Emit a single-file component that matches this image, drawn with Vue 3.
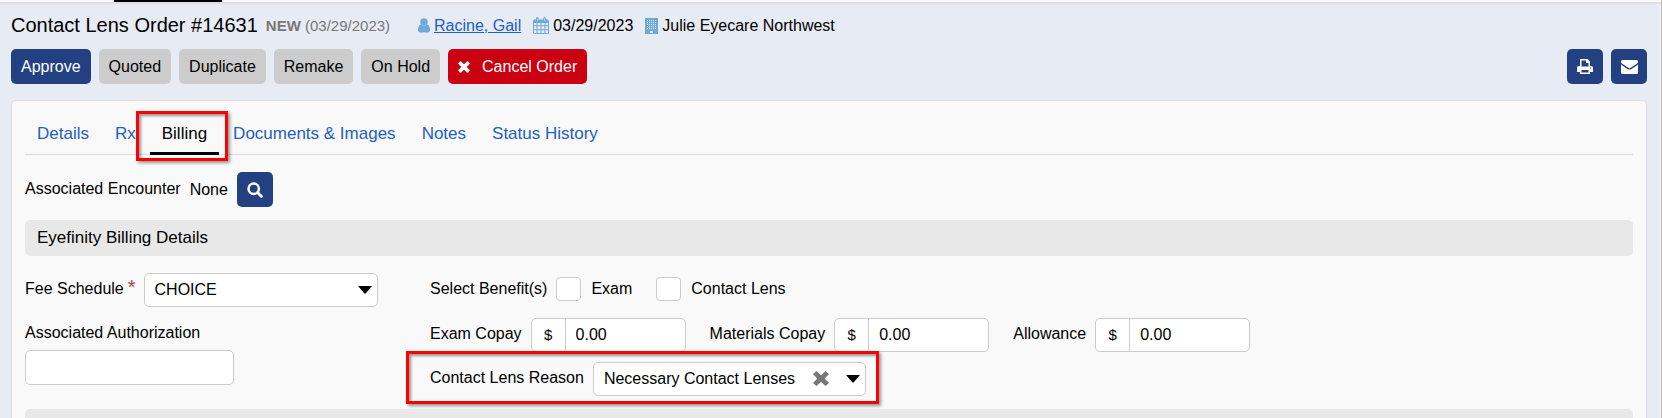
<script setup>
import { ref } from 'vue'

const actions = ['Quoted', 'Duplicate', 'Remake', 'On Hold']
const tabs = ['Details', 'Rx', 'Billing', 'Documents & Images', 'Notes', 'Status History']
const activeTab = ref('Billing')
const feeSchedule = ref('CHOICE')
const authorization = ref('')
const reason = ref('Necessary Contact Lenses')
const amounts = ref([
  { id: 'exam-copay', label: 'Exam Copay', value: '0.00' },
  { id: 'materials-copay', label: 'Materials Copay', value: '0.00' },
  { id: 'allowance', label: 'Allowance', value: '0.00' }
])
</script>

<template>
  <div class="page">
    <div class="topbar"><span class="topbar-active"></span></div>

    <header class="order-head">
      <h1>Contact Lens Order #14631</h1>
      <p class="state"><b>NEW</b> (03/29/2023)</p>
      <div class="meta patient">
        <svg class="icon" width="12" height="15" viewBox="0 0 12 15" aria-hidden="true">
          <circle cx="6" cy="4" r="3.7" />
          <path d="M3 6.6C1 7 0 9 0 12c0 1.600 1 2.500 2.300 2.500h7.400C11 14.500 12 13.600 12 12c0-3-1-5-3-5.400C8.200 7.500 7.100 8 6 8S3.800 7.500 3 6.600z" />
        </svg>
        <a href="#">Racine, Gail</a>
      </div>
      <div class="meta">
        <svg class="icon" width="16" height="17" viewBox="0 0 16 17" aria-hidden="true">
          <path fill-rule="evenodd" d="M1.500 2.500H3V1.500Q3 0 4.300 0T5.600 1.500v1h4.800v-1Q10.400 0 11.700 0T13 1.500v1h1.500Q16 2.500 16 4v11.500Q16 17 14.500 17h-13Q0 17 0 15.500V4Q0 2.500 1.500 2.500zM1 6v2.200h2.500V6zm3.500 0v2.200h3V6zm4 0v2.200h3V6zm4 0v2.200H15V6zM1 9.200v3h2.500v-3zm3.500 0v3h3v-3zm4 0v3h3v-3zm4 0v3H15v-3zM1 13.200V16h2.500v-2.800zm3.500 0V16h3v-2.800zm4 0V16h3v-2.800zm4 0V16H15v-2.800zM4 1.500v2.500h.6V1.500zm7.400 0v2.500h.6V1.500z" />
        </svg>
        <span>03/29/2023</span>
      </div>
      <div class="meta">
        <svg class="icon" width="13" height="16" viewBox="0 0 13 16" aria-hidden="true">
          <path fill-rule="evenodd" d="M0 0h13v16H0zM5 13v2h3v-2z" />
          <path class="windows" d="M2 2.500h9M2 4.500h9M2 6.500h9M2 8.500h9M2 10.500h9" />
        </svg>
        <span>Julie Eyecare Northwest</span>
      </div>
    </header>

    <div class="toolbar">
      <button type="button" class="btn primary">Approve</button>
      <button v-for="a in actions" :key="a" type="button" class="btn">{{ a }}</button>
      <button type="button" class="btn danger">
        <svg width="12" height="12" viewBox="0 0 12 12" aria-hidden="true"><path d="M2.500 0L6 3.300 9.500 0 12 2.500 8.700 6 12 9.500 9.500 12 6 8.700 2.500 12 0 9.500 3.300 6 0 2.500z" /></svg>
        Cancel Order
      </button>
      <span class="spacer"></span>
      <button type="button" class="btn primary square" aria-label="Print">
        <svg width="16" height="15" viewBox="0 0 16 15" aria-hidden="true">
          <path fill-rule="evenodd" d="M3 0h7.500L13 2.500V7h1.200Q16 7 16 8.800V13h-3v2H3v-2H0V8.800Q0 7 1.800 7H3zM4.500 1.500v6h7V4H9V1.500zM4.500 11v2.500h7V11zM13.200 8.400v1h1v-1z" />
        </svg>
      </button>
      <button type="button" class="btn primary square" aria-label="Email">
        <svg width="17" height="14" viewBox="0 0 17 14" aria-hidden="true">
          <path d="M1.500 0h14Q17 0 17 1.500v.7Q16.500 3.600 8.500 8.500 .5 3.600 0 2.200v-.7Q0 0 1.500 0zM0 4.300q1.500 1.700 6.500 4.600 2 1.300 4 0 5-2.900 6.500-4.600v8.200Q17 14 15.500 14h-14Q0 14 0 12.500z" />
        </svg>
      </button>
    </div>

    <main class="panel">
      <nav class="tabs">
        <div v-for="t in tabs" :key="t" class="tab-slot">
          <a href="#" class="tab" :class="{ active: t === activeTab }" @click.prevent="activeTab = t">{{ t }}</a>
          <span v-if="t === 'Billing'" class="callout callout-tab"></span>
        </div>
      </nav>

      <div class="encounter">
        <span class="enc-label">Associated Encounter</span>
        <span>None</span>
        <button type="button" class="btn primary square" aria-label="Search encounters">
          <svg width="16" height="16" viewBox="0 0 16 16" aria-hidden="true">
            <circle cx="6.7" cy="6.700" r="5.200" class="lens" />
            <path d="M10.500 10.500l4 4" class="handle" />
          </svg>
        </button>
      </div>

      <h2 class="section">Eyefinity Billing Details</h2>

      <div class="form">
        <div class="col">
          <div class="row first">
            <label for="fee">Fee Schedule<span class="required">*</span></label>
            <div class="select-box fee">
              <select id="fee" v-model="feeSchedule"><option>CHOICE</option></select>
              <svg class="caret" width="14" height="8" viewBox="0 0 14 8" aria-hidden="true"><path d="M0 0h14L7.500 7.500h-1z" /></svg>
            </div>
          </div>
          <label for="auth" class="auth-label">Associated Authorization</label>
          <input id="auth" v-model="authorization" type="text" class="auth" />
        </div>

        <div class="col">
          <div class="row first">
            <span class="label benefits">Select Benefit(s)</span>
            <label class="check"><input type="checkbox" />Exam</label>
            <label class="check"><input type="checkbox" />Contact Lens</label>
          </div>
          <div class="row money">
            <div v-for="m in amounts" :key="m.id" class="field">
              <label :for="m.id">{{ m.label }}</label>
              <div class="amount">
                <span class="unit">$</span>
                <input :id="m.id" v-model="m.value" type="text" />
              </div>
            </div>
          </div>
          <div class="row reason-row">
            <label for="reason">Contact Lens Reason</label>
            <div class="select-box reason">
              <select id="reason" v-model="reason">
                <option value=""></option>
                <option>Necessary Contact Lenses</option>
              </select>
              <button type="button" class="clear" aria-label="Clear reason" @click="reason = ''">
                <svg width="16" height="15" viewBox="0 0 12 12" preserveAspectRatio="none" aria-hidden="true"><path d="M2.500 0L6 3.300 9.500 0 12 2.500 8.700 6 12 9.500 9.500 12 6 8.700 2.500 12 0 9.500 3.300 6 0 2.500z" /></svg>
              </button>
              <svg class="caret" width="14" height="8" viewBox="0 0 14 8" aria-hidden="true"><path d="M0 0h14L7.500 7.500h-1z" /></svg>
            </div>
            <span class="callout callout-reason"></span>
          </div>
        </div>
      </div>

      <div class="section"></div>
    </main>
  </div>
</template>

<style>
html, body { margin: 0; height: 100%; overflow: hidden; background: #e7ebf3; }
#app { height: 100%; }
</style>

<style scoped>
* { box-sizing: border-box; }
.page {
  height: 100%;
  overflow: hidden;
  background: #e7ebf3;
  border-right: 1px solid #bbb;
  box-shadow: inset -2px 0 #f0f0f0;
  color: #000;
  font: 16px/20px "Liberation Sans", Arial, sans-serif;
}
button, input, select { font: inherit; color: inherit; margin: 0; }
svg { display: block; flex: none; fill: currentColor; }

.topbar { height: 5px; background: linear-gradient(#f9f9f9 2px, #dcdfe4 2px, #dfe3e9 4px, #e7ebf3 5px); display: flex; }
.topbar-active { width: 108px; height: 2px; margin-left: 114px; background: #000; }

.order-head { display: flex; align-items: center; height: 44px; padding: 0 14px 4px 11px; }
h1 { margin: 0; font-size: 20px; line-height: 24px; font-weight: 400; }
.state { margin: 2px 0 0 8px; font-size: 15px; color: #777; }
.meta { display: flex; align-items: center; gap: 4px; margin: 1px 0 0 12px; }
.meta.patient { margin-left: 28px; }
.icon { color: #6fa8dc; }
.windows { stroke: #e7ebf3; stroke-width: 1; stroke-dasharray: 1 1; fill: none; }
a { color: #1f5fbf; }

.toolbar { display: flex; gap: 8px; padding: 0 14px 0 11px; }
.btn {
  display: flex;
  align-items: center;
  justify-content: center;
  height: 35px;
  padding: 0 10px;
  border: 0;
  border-radius: 5px;
  background: #ccc;
  white-space: nowrap;
}
.btn.primary { background: #234082; color: #fff; }
.btn.danger { background: #cb0011; color: #fff; gap: 12px; }
.btn.square { width: 36px; padding: 0; }
.spacer { flex: 1; }

.panel {
  margin: 16px 14px 0 11px;
  padding: 0 13px 20px;
  background: #f9f9f9;
  border: 1px solid #ddd;
  border-radius: 5px;
}
.tabs { display: flex; gap: 2px; height: 54px; padding-top: 10px; border-bottom: 1px solid #d9d9d9; }
.tab-slot { position: relative; height: 44px; }
.tab {
  display: block;
  height: 44px;
  padding: 0 12px;
  font-size: 17px;
  line-height: 45px;
  text-decoration: none;
  white-space: nowrap;
}
.tab.active { color: #000; border-bottom: 3px solid #000; }

.callout { position: absolute; border: 3px solid #f00; pointer-events: none; box-shadow: 2px 2px 3px rgba(0, 0, 0, .4), inset 2px 2px 3px rgba(0, 0, 0, .4); }
.callout-tab { inset: 0 -9px -6px -14px; }
.callout-reason { inset: -11px -13px -8px -24px; }

.encounter { display: flex; align-items: center; gap: 9px; margin-top: 17px; }
.enc-label { padding-bottom: 2px; }
.lens { fill: none; stroke: currentColor; stroke-width: 2.500; }
.handle { fill: none; stroke: currentColor; stroke-width: 2.800; stroke-linecap: round; }

.section {
  height: 36px;
  margin: 13px 0 0;
  padding: 0 12px;
  border-radius: 5px;
  background: #e8e8e8;
  font-size: 17px;
  line-height: 35px;
  font-weight: 400;
}
.form { display: grid; grid-template-columns: 405px 1fr; padding-top: 17px; }
.row { display: flex; line-height: 32px; }
.row.first { height: 35px; }
.money { gap: 24px; }
.field { display: flex; gap: 9px; }
.required { margin: 0 8px 0 4px; color: #a94442; font-size: 20px; line-height: 24px; }
.auth-label { display: block; margin-top: 15px; }

.select-box, .amount, .auth { height: 34px; background: #fff; border: 1px solid #ccc; border-radius: 5px; }
.select-box { position: relative; }
select {
  width: 100%;
  height: 32px;
  padding: 0 0 0 10px;
  border: 0;
  background: none;
  appearance: none;
  line-height: 32px;
}
.fee { width: 234px; }
.caret { position: absolute; right: 5px; top: 12px; pointer-events: none; }
.auth { display: block; width: 209px; height: 35px; margin-top: 7px; padding: 0 10px; }

.benefits { margin-right: 9px; }
.check { display: flex; gap: 10px; margin-right: 24px; }
.check input { appearance: none; width: 25px; height: 24px; margin-top: 4px; background: #fff; border: 1px solid #ccc; border-radius: 4px; }

.amount { display: flex; width: 155px; overflow: hidden; }
.unit { width: 34px; border-right: 1px solid #ccc; text-align: center; font-size: 15px; }
.amount input { flex: 1; min-width: 0; padding: 0 10px; border: 0; background: none; }

.money { margin-top: 10px; }
.reason-row { position: relative; width: fit-content; gap: 9px; margin-top: 10px; }
.reason { width: 273px; }
.clear { position: absolute; right: 36px; top: 8px; padding: 0; border: 0; background: none; color: #777; }
</style>
